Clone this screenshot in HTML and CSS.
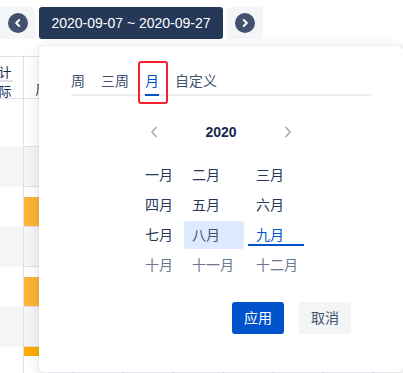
FILE: index.html
```html
<!DOCTYPE html>
<html lang="zh">
<head>
<meta charset="utf-8">
<link rel="stylesheet" href="styles.css">
</head>
<body>
<div class="toolbar">
  <div class="nav nav-left">
    <svg width="20" height="20" viewBox="0 0 20 20"><circle cx="10" cy="10" r="10" fill="#42526e"/><path d="M11.2 7 L8.2 10 L11.2 13" fill="none" stroke="#fff" stroke-width="2" stroke-linecap="round" stroke-linejoin="round"/></svg>
  </div>
  <div class="range">2020-09-07 ~ 2020-09-27</div>
  <div class="nav nav-right">
    <svg width="20" height="20" viewBox="0 0 20 20"><circle cx="10" cy="10" r="10" fill="#42526e"/><path d="M8.8 7 L11.8 10 L8.8 13" fill="none" stroke="#fff" stroke-width="2" stroke-linecap="round" stroke-linejoin="round"/></svg>
  </div>
</div>

<div class="table">
  <div class="row head">
    <div class="cell first"><div class="h-top"><span>合计</span></div><div class="h-bot">实际</div></div>
    <div class="cell"><div class="h-top"></div><div class="h-bot">周一</div></div>
    <div class="cell"></div>
    <div class="cell"></div>
    <div class="cell"></div>
    <div class="cell"></div>
    <div class="cell"></div>
    <div class="cell"></div>
    <div class="cell"></div>
  </div>
  <div class="row r1"><div class="cell first"></div><div class="cell"></div><div class="cell"></div><div class="cell"></div><div class="cell"></div><div class="cell"></div><div class="cell"></div><div class="cell"></div><div class="cell"></div></div>
  <div class="row alt"><div class="cell first"></div><div class="cell"></div><div class="cell"></div><div class="cell"></div><div class="cell"></div><div class="cell"></div><div class="cell"></div><div class="cell"></div><div class="cell"></div></div>
  <div class="row"><div class="cell first"></div><div class="cell"><div class="bar"></div></div><div class="cell"></div><div class="cell"></div><div class="cell"></div><div class="cell"></div><div class="cell"></div><div class="cell"></div><div class="cell"></div></div>
  <div class="row alt"><div class="cell first"></div><div class="cell"></div><div class="cell"></div><div class="cell"></div><div class="cell"></div><div class="cell"></div><div class="cell"></div><div class="cell"></div><div class="cell"></div></div>
  <div class="row"><div class="cell first"></div><div class="cell"><div class="bar"></div></div><div class="cell"></div><div class="cell"></div><div class="cell"></div><div class="cell"></div><div class="cell"></div><div class="cell"></div><div class="cell"></div></div>
  <div class="row alt"><div class="cell first"></div><div class="cell"></div><div class="cell"></div><div class="cell"></div><div class="cell"></div><div class="cell"></div><div class="cell"></div><div class="cell"></div><div class="cell"></div></div>
  <div class="row"><div class="cell first"></div><div class="cell"><div class="bar bar-top"></div></div><div class="cell"></div><div class="cell"></div><div class="cell"></div><div class="cell"></div><div class="cell"></div><div class="cell"></div><div class="cell"></div></div>
</div>

<div class="popover">
  <div class="tabs">
    <div class="tab">周</div>
    <div class="tab">三周</div>
    <div class="tab active">月</div>
    <div class="tab">自定义</div>
  </div>
  <div class="year-row">
    <svg class="arrow" width="8" height="12" viewBox="0 0 8 12"><path d="M6 1.5 L2 6 L6 10.5" fill="none" stroke="#a5adba" stroke-width="1.7" stroke-linecap="round" stroke-linejoin="round"/></svg>
    <div class="year">2020</div>
    <svg class="arrow" width="8" height="12" viewBox="0 0 8 12"><path d="M2 1.5 L6 6 L2 10.5" fill="none" stroke="#a5adba" stroke-width="1.7" stroke-linecap="round" stroke-linejoin="round"/></svg>
  </div>
  <div class="months">
    <div class="month">一月</div>
    <div class="month">二月</div>
    <div class="month">三月</div>
    <div class="month">四月</div>
    <div class="month">五月</div>
    <div class="month">六月</div>
    <div class="month">七月</div>
    <div class="month in-range">八月</div>
    <div class="month selected">九月</div>
    <div class="month disabled">十月</div>
    <div class="month disabled">十一月</div>
    <div class="month disabled">十二月</div>
  </div>
  <div class="footer">
    <div class="btn primary">应用</div>
    <div class="btn secondary">取消</div>
  </div>
</div>
</body>
</html>
```

FILE: styles.css
```css
html, body {
  margin: 0;
  padding: 0;
}
body {
  width: 403px;
  height: 373px;
  overflow: hidden;
  position: relative;
  background: #fff;
  font-family: "Liberation Sans", "Noto Sans CJK SC", sans-serif;
  color: #172b4d;
}

/* toolbar */
.toolbar {
  display: flex;
  gap: 4px;
  padding-top: 7px;
}
.nav {
  width: 35px;
  height: 32px;
  background: #f4f5f7;
  border-radius: 3px;
  display: flex;
  align-items: center;
  justify-content: center;
}
.nav-left {
  border-radius: 0 3px 3px 0;
}
.nav-right {
  width: 36px;
}
.nav svg {
  display: block;
}
.range {
  width: 184px;
  height: 32px;
  line-height: 32px;
  background: #253858;
  color: #fff;
  font-size: 14px;
  text-align: center;
  border-radius: 3px;
}

/* table behind */
.table {
  margin-top: 17px;
  margin-left: -26px;
  width: 429px;
}
.row {
  display: flex;
  height: 40px;
}
.row.alt {
  background: #f4f5f7;
}
.row.r1 {
  height: 48px;
}
.cell {
  width: 50px;
  flex: none;
  box-sizing: border-box;
  border-right: 1px solid #dfe1e6;
  position: relative;
}
.cell:not(.first) {
  border-bottom: 1px solid #dfe1e6;
}
.row.head {
  height: 43px;
  border-top: 1px solid #dfe1e6;
  border-bottom: 1px solid #dfe1e6;
  box-sizing: border-box;
}
.row.head .cell {
  border-bottom: none;
  font-size: 13px;
  color: #172b4d;
  text-align: center;
}
.h-top {
  height: 23px;
  box-sizing: border-box;
  padding-top: 9px;
  line-height: 13px;
}
.h-top span {
  display: inline-block;
  border-bottom: 2px solid #dfe1e6;
  padding: 0 1px 1px;
  line-height: 13px;
}
.first .h-top {
  height: 25px;
}
.h-bot {
  line-height: 13px;
  padding-top: 3px;
}
.bar {
  margin-top: 10px;
  height: 29px;
  background: #fbb536;
}
.bar.bar-top {
  margin-top: 0;
  height: 9px;
  background: #ffab00;
}

/* popover */
.popover {
  position: absolute;
  left: 39px;
  top: 46px;
  width: 364px;
  height: 326px;
  background: #fff;
  border-radius: 4px;
  box-shadow: 0 2px 14px rgba(9, 30, 66, 0.13), 0 0 1px rgba(9, 30, 66, 0.35);
}
.tabs {
  display: flex;
  gap: 16px;
  margin: 25px 32px 0;
  border-bottom: 2px solid #ebecf0;
}
.tab {
  font-size: 14px;
  line-height: 20px;
  padding-bottom: 3px;
  margin-bottom: -2px;
  border-bottom: 2px solid transparent;
  color: #42526e;
  position: relative;
}
.tab.active {
  color: #0052cc;
  border-bottom-color: #0052cc;
}
.tab.active::after {
  content: "";
  position: absolute;
  left: -7px;
  top: -10px;
  width: 30px;
  height: 43px;
  box-sizing: border-box;
  border: 2px solid #f5222d;
  border-radius: 3px;
}

.year-row {
  margin: 22px 0 0 111px;
  width: 142px;
  height: 28px;
  display: flex;
  align-items: center;
  justify-content: space-between;
}
.arrow {
  display: block;
}
.year {
  font-size: 14px;
  font-weight: bold;
  color: #172b4d;
}

.months {
  margin: 15px 0 0 98px;
  display: grid;
  grid-template-columns: 43px 60px 56px;
  column-gap: 4px;
  row-gap: 2px;
  width: 167px;
}
.month {
  height: 28px;
  line-height: 28px;
  padding-left: 8px;
  box-sizing: border-box;
  font-size: 14px;
  color: #253858;
  border-radius: 3px;
  white-space: nowrap;
}
.month.in-range {
  background: #deebff;
  color: #42526e;
}
.month.selected {
  color: #0052cc;
  border-radius: 0;
  box-shadow: inset 0 -3px 0 #fff, inset 0 -5px 0 #0052cc;
}
.month.disabled {
  color: #6b778c;
}

.footer {
  margin-top: 23px;
  display: flex;
  justify-content: flex-end;
  gap: 15px;
  padding-right: 52px;
}
.btn {
  width: 52px;
  height: 32px;
  line-height: 32px;
  text-align: center;
  font-size: 14px;
  border-radius: 3px;
}
.btn.primary {
  background: #0052cc;
  color: #fff;
}
.btn.secondary {
  background: #f4f5f7;
  color: #42526e;
}
```
